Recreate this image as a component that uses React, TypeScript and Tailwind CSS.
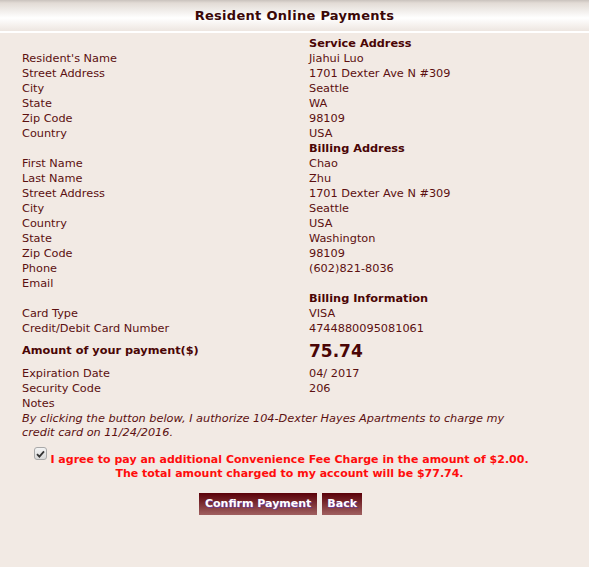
import React from "react";

const F = { fontFamily: '"DejaVu Sans", Verdana, sans-serif' };

function Row({ label, value }: { label?: string; value?: string }) {
  return (
    <div className="flex h-[15px] leading-[15px]">
      <div className="w-[287px] shrink-0">{label}</div>
      <div>{value}</div>
    </div>
  );
}

function Head({ text }: { text: string }) {
  return (
    <div className="flex h-[15px] leading-[15px]">
      <div className="w-[287px] shrink-0" />
      <div className="font-bold text-[#4a0505]">{text}</div>
    </div>
  );
}

export default function App() {
  return (
    <div className="w-[589px] h-[567px] bg-[#f2eae4] text-[#5c1010] text-[11.3px]" style={F}>
      <div className="h-[33px] bg-[linear-gradient(to_bottom,#c9c2bd_0px,#e2dbd5_3px,#ffffff_18px,#ece4de_32px)] flex items-center justify-center border-b-[2px] border-white">
        <span className="font-bold text-[13px] text-[#3a0808] tracking-[0.3px] mt-[1px]">Resident Online Payments</span>
      </div>
      <div className="pl-[22px] pt-[3px]">
        <Head text="Service Address" />
        <Row label="Resident's Name" value="Jiahui Luo" />
        <Row label="Street Address" value="1701 Dexter Ave N #309" />
        <Row label="City" value="Seattle" />
        <Row label="State" value="WA" />
        <Row label="Zip Code" value="98109" />
        <Row label="Country" value="USA" />
        <Head text="Billing Address" />
        <Row label="First Name" value="Chao" />
        <Row label="Last Name" value="Zhu" />
        <Row label="Street Address" value="1701 Dexter Ave N #309" />
        <Row label="City" value="Seattle" />
        <Row label="Country" value="USA" />
        <Row label="State" value="Washington" />
        <Row label="Zip Code" value="98109" />
        <Row label="Phone" value="(602)821-8036" />
        <Row label="Email" value="" />
        <Head text="Billing Information" />
        <Row label="Card Type" value="VISA" />
        <Row label="Credit/Debit Card Number" value="4744880095081061" />
        <div className="flex items-center h-[30px]">
          <div className="w-[287px] shrink-0 font-bold text-[#4a0505]">Amount of your payment($)</div>
          <div className="font-bold text-[17px] text-[#4a0505] mt-[1px]">75.74</div>
        </div>
        <Row label="Expiration Date" value="04/ 2017" />
        <Row label="Security Code" value="206" />
        <Row label="Notes" value="" />
        <div className="italic leading-[14px] w-[505px] mt-[1px]">
          By clicking the button below, I authorize 104-Dexter Hayes Apartments to charge my credit card on 11/24/2016.
        </div>
      </div>
      <div className="flex justify-center mt-[7px] pr-[10px]">
        <div className="relative text-center font-bold text-[11px] text-[#ff0d0d] leading-[14px] pt-[6px]">
          <span className="absolute left-[-16px] top-[0px] w-[13px] h-[13px] rounded-[3px] border border-[#a9a9a9] bg-[linear-gradient(#f4f4f4,#d8d8d8)] flex items-center justify-center">
            <svg width="9" height="8" viewBox="0 0 9 8"><path d="M1 4.2 L3.4 6.6 L8 1.4" stroke="#333" strokeWidth="1.8" fill="none" /></svg>
          </span>
          I agree to pay an additional Convenience Fee Charge in the amount of $2.00.
          <br />
          The total amount charged to my account will be $77.74.
        </div>
      </div>
      <div className="flex justify-center gap-[5px] mt-[12px] pr-[28px]">
        <button className="h-[22px] px-[6px] bg-[linear-gradient(to_bottom,#5a0008,#a06060)] text-white font-bold text-[11px] [text-shadow:1px_1px_0_#6a3a9a]">
          Confirm Payment
        </button>
        <button className="h-[22px] px-[5px] bg-[linear-gradient(to_bottom,#5a0008,#a06060)] text-white font-bold text-[11px] [text-shadow:1px_1px_0_#6a3a9a]">
          Back
        </button>
      </div>
    </div>
  );
}
